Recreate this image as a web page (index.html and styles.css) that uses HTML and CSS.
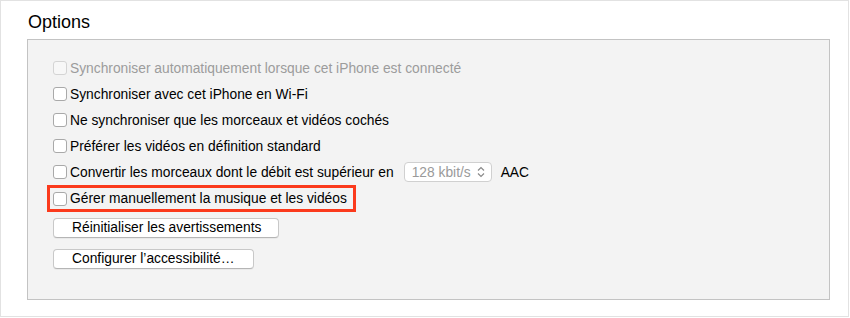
FILE: index.html
```html
<!DOCTYPE html>
<html lang="fr">
<head>
<meta charset="utf-8">
<link rel="stylesheet" href="styles.css">
</head>
<body>
<div class="frame">
  <h1 class="title">Options</h1>
  <div class="panel">
    <div class="rows">
      <label class="row disabled"><span class="cb"></span><span>Synchroniser automatiquement lorsque cet iPhone est connecté</span></label>
      <label class="row"><span class="cb"></span><span>Synchroniser avec cet iPhone en Wi-Fi</span></label>
      <label class="row"><span class="cb"></span><span>Ne synchroniser que les morceaux et vidéos cochés</span></label>
      <label class="row"><span class="cb"></span><span>Préférer les vidéos en définition standard</span></label>
      <label class="row"><span class="cb"></span><span>Convertir les morceaux dont le débit est supérieur en</span>
        <span class="popup"><span class="popup-text">128 kbit/s</span>
          <svg class="stepper" width="8" height="12" viewBox="0 0 8 12"><path d="M1 4.5 L4 1.5 L7 4.5 M1 7.5 L4 10.5 L7 7.5" fill="none" stroke="#8a8a8a" stroke-width="1.2"/></svg>
        </span>
        <span class="aac">AAC</span></label>
      <label class="row hl"><span class="cb"></span><span>Gérer manuellement la musique et les vidéos</span></label>
    </div>
    <div class="buttons">
      <button class="btn btn-reset">Réinitialiser les avertissements</button>
      <button class="btn btn-access">Configurer l’accessibilité…</button>
    </div>
  </div>
</div>
</body>
</html>
```
FILE: styles.css
```css
* { box-sizing: border-box; }
html, body { margin: 0; padding: 0; background: #fff; }
body {
  font-family: "Helvetica Neue", Helvetica, "Liberation Sans", Arial, sans-serif;
  font-size: 13.8px;
  color: #000;
}
.frame {
  width: 849px;
  height: 317px;
  border: 1px solid #e2e2e2;
  padding: 10px 0 0 26px;
}
.title {
  margin: 0;
  padding-left: 1px;
  font-size: 18px;
  font-weight: normal;
  line-height: 22px;
  height: 28px;
}
.panel {
  width: 803px;
  height: 261px;
  background: #f3f3f3;
  border: 1px solid #c3c3c3;
  padding: 18px 0 0 25px;
}
.rows {
  display: flex;
  flex-direction: column;
  gap: 6px;
}
.row {
  display: flex;
  align-items: center;
  height: 20px;
  white-space: nowrap;
}
.cb {
  width: 14px;
  height: 14px;
  border: 1px solid #a9a9a9;
  border-radius: 3px;
  background: #fff;
  margin-right: 3px;
  flex: none;
}
.row.disabled { color: #9c9c9c; }
.row.disabled .cb { border-color: #d4d4d4; background: #f7f7f7; }
.row.hl {
  align-self: flex-start;
  height: 27px;
  margin: -3px 0 -4px -6px;
  padding: 0 6px 0 3px;
  border: 3px solid #fb3a1c;
}
.popup {
  display: inline-flex;
  align-items: center;
  justify-content: space-between;
  width: 88px;
  height: 20px;
  margin-left: 10px;
  padding: 0 6px 0 7px;
  background: #fff;
  border: 1px solid #d0d0d0;
  border-radius: 4px;
  color: #9a9a9a;
}
.aac { margin-left: 9px; }
.buttons {
  display: flex;
  flex-direction: column;
  align-items: flex-start;
  gap: 11px;
  margin-top: 10px;
}
.btn {
  font: inherit;
  color: #000;
  height: 20px;
  padding: 0 0 0 18px;
  text-align: left;
  background: #fff;
  border: 1px solid #c8c8c8;
  border-bottom-color: #b5b5b5;
  border-radius: 4px;
  box-shadow: 0 1px 0 rgba(0,0,0,0.04);
  line-height: 18px;
}
.btn-reset { width: 226px; }
.btn-access { width: 201px; }
```
